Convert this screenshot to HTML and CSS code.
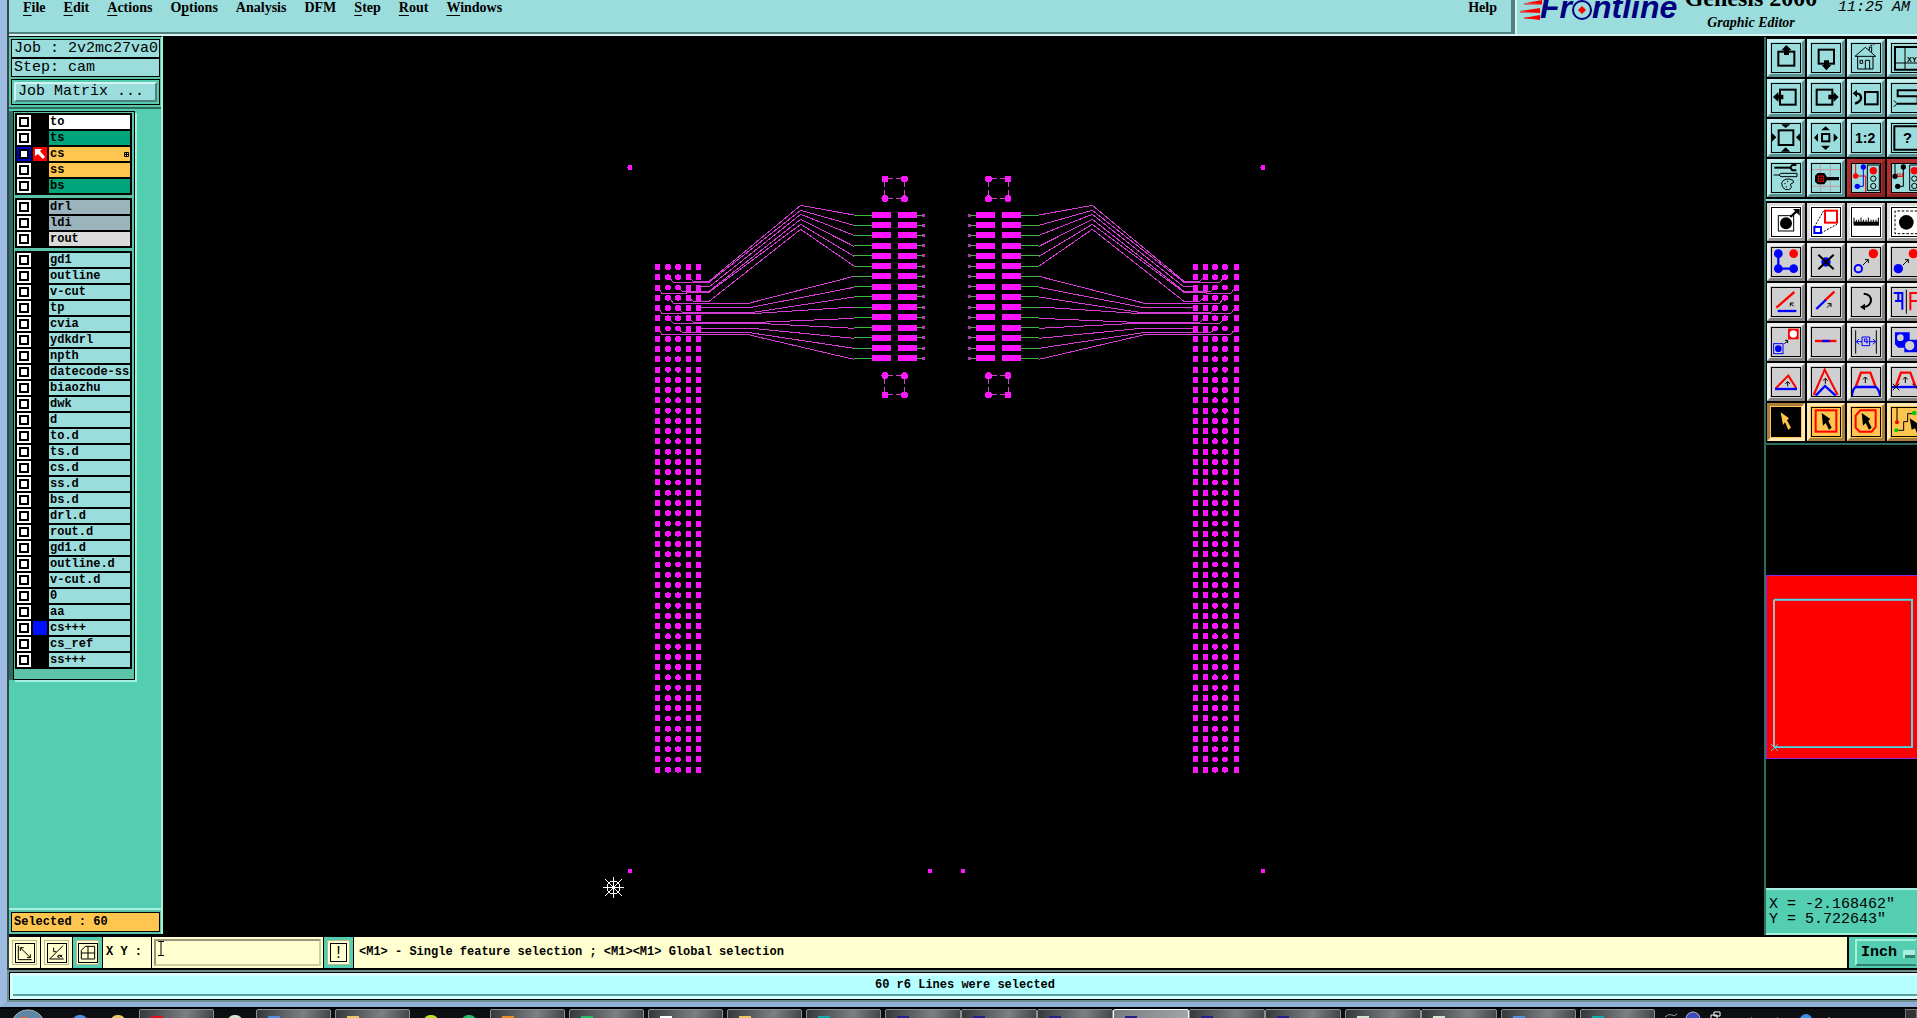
FILE: index.html
```html
<!DOCTYPE html>
<html lang="en">
<head>
<meta charset="utf-8">
<title>Genesis 2000 Graphic Editor</title>
<link rel="stylesheet" href="styles.css">
</head>
<body>
<div class="window">
  <header class="header">
    <nav class="menubar">
      <button class="menu"><u>F</u>ile</button>
      <button class="menu"><u>E</u>dit</button>
      <button class="menu"><u>A</u>ctions</button>
      <button class="menu">O<u>p</u>tions</button>
      <button class="menu">Analysis</button>
      <button class="menu">DFM</button>
      <button class="menu"><u>S</u>tep</button>
      <button class="menu"><u>R</u>out</button>
      <button class="menu"><u>W</u>indows</button>
      <button class="menu menu-help">Help</button>
    </nav>
    <div class="brand">
      <svg class="logo" viewBox="0 0 162 36" role="img" aria-label="Frontline">
        <path d="M6 3L22 0V4ZM0 11L20 8V13ZM4 18L20 15V20Z" fill="#f00"/>
        <path d="M4 4H22M0 12H20M4 18H20" stroke="#f00"/>
        <text x="20" y="18" class="logo-text">Fr</text>
        <text x="72" y="18" class="logo-text">ntline</text>
        <circle cx="62" cy="10" r="9" fill="#9bdcdc" stroke="#000080" stroke-width="2"/>
        <path d="M62 6L66 10L62 14L58 10Z" fill="#f00"/>
      </svg>
      <div class="product">
        <strong class="product-name">Genesis 2000</strong>
        <em class="product-sub">Graphic Editor</em>
      </div>
      <time class="clock">11:25 AM</time>
    </div>
  </header>

  <div class="workspace">
    <aside class="sidebar">
      <div class="job">
        <p class="field">Job : 2v2mc27va0</p>
        <p class="field">Step: cam</p>
        <div class="matrix"><button class="matrix-button">Job Matrix ...</button></div>
      </div>
      <div class="layers">
        <ul class="group">
          <li class="layer white"><input type="checkbox" id="l1"><i></i><label for="l1">to</label></li>
          <li class="layer mask"><input type="checkbox" id="l2"><i></i><label for="l2">ts</label></li>
          <li class="layer copper active"><input type="checkbox" id="l3" checked><i><svg viewBox="0 0 14 14"><path d="M2 2H9L7 4L12 10L10 12L5 7L2 9Z" fill="#fff"/></svg></i><label for="l3">cs <svg class="mark" viewBox="0 0 5 5"><path d="M0.500 0.500H4.500V4.500H0.500ZM2.500 0V5M0 2.500H5" fill="none" stroke="#000"/></svg></label></li>
          <li class="layer copper"><input type="checkbox" id="l4"><i></i><label for="l4">ss</label></li>
          <li class="layer mask"><input type="checkbox" id="l5"><i></i><label for="l5">bs</label></li>
        </ul>
        <ul class="group">
          <li class="layer drill"><input type="checkbox" id="l6"><i></i><label for="l6">drl</label></li>
          <li class="layer drill"><input type="checkbox" id="l7"><i></i><label for="l7">ldi</label></li>
          <li class="layer rout"><input type="checkbox" id="l8"><i></i><label for="l8">rout</label></li>
        </ul>
        <ul class="group">
          <li class="layer"><input type="checkbox" id="m1"><i></i><label for="m1">gd1</label></li>
          <li class="layer"><input type="checkbox" id="m2"><i></i><label for="m2">outline</label></li>
          <li class="layer"><input type="checkbox" id="m3"><i></i><label for="m3">v-cut</label></li>
          <li class="layer"><input type="checkbox" id="m4"><i></i><label for="m4">tp</label></li>
          <li class="layer"><input type="checkbox" id="m5"><i></i><label for="m5">cvia</label></li>
          <li class="layer"><input type="checkbox" id="m6"><i></i><label for="m6">ydkdrl</label></li>
          <li class="layer"><input type="checkbox" id="m7"><i></i><label for="m7">npth</label></li>
          <li class="layer"><input type="checkbox" id="m8"><i></i><label for="m8">datecode-ss</label></li>
          <li class="layer"><input type="checkbox" id="m9"><i></i><label for="m9">biaozhu</label></li>
          <li class="layer"><input type="checkbox" id="m10"><i></i><label for="m10">dwk</label></li>
          <li class="layer"><input type="checkbox" id="m11"><i></i><label for="m11">d</label></li>
          <li class="layer"><input type="checkbox" id="m12"><i></i><label for="m12">to.d</label></li>
          <li class="layer"><input type="checkbox" id="m13"><i></i><label for="m13">ts.d</label></li>
          <li class="layer"><input type="checkbox" id="m14"><i></i><label for="m14">cs.d</label></li>
          <li class="layer"><input type="checkbox" id="m15"><i></i><label for="m15">ss.d</label></li>
          <li class="layer"><input type="checkbox" id="m16"><i></i><label for="m16">bs.d</label></li>
          <li class="layer"><input type="checkbox" id="m17"><i></i><label for="m17">drl.d</label></li>
          <li class="layer"><input type="checkbox" id="m18"><i></i><label for="m18">rout.d</label></li>
          <li class="layer"><input type="checkbox" id="m19"><i></i><label for="m19">gd1.d</label></li>
          <li class="layer"><input type="checkbox" id="m20"><i></i><label for="m20">outline.d</label></li>
          <li class="layer"><input type="checkbox" id="m21"><i></i><label for="m21">v-cut.d</label></li>
          <li class="layer"><input type="checkbox" id="m22"><i></i><label for="m22">0</label></li>
          <li class="layer"><input type="checkbox" id="m23"><i></i><label for="m23">aa</label></li>
          <li class="layer shown"><input type="checkbox" id="m24"><i></i><label for="m24">cs+++</label></li>
          <li class="layer"><input type="checkbox" id="m25"><i></i><label for="m25">cs_ref</label></li>
          <li class="layer"><input type="checkbox" id="m26"><i></i><label for="m26">ss+++</label></li>
        </ul>
      </div>
      <div class="selected-wrap"><p class="selected">Selected : 60</p></div>
    </aside>

    <main class="canvas">
      <svg class="board" viewBox="163 36 1601 898" preserveAspectRatio="xMidYMin meet">
        <defs>
          <g id="half">
            <g stroke="#ff14ff" fill="none">
              <path d="M657 264V774M688 264V774M698 264V774" stroke-width="5" stroke-dasharray="6 4.26"/>
              <path d="M668 267V774M678 267V774" stroke-width="6" stroke-dasharray="0.01 10.25" stroke-linecap="round"/>
              <path d="M881.5 212V362M907.5 212V362" stroke-width="19" stroke-dasharray="6 4.24"/>
            </g>
            <path d="M863 214.500V362" stroke="#3db83d" stroke-width="18" stroke-dasharray="1 9.24"/>
            <path d="M919.500 214.500V362" stroke="#3db83d" stroke-width="5" stroke-dasharray="1 9.24"/>
            <path d="M923.500 213.500V362" stroke="#b535b5" stroke-width="3" stroke-dasharray="3 7.240"/>
            <g class="wires" transform="translate(640 150) scale(.33333)">
              <path d="M642 195L482 166L207 394H160L150 384"/>
              <path d="M642 226L482 181L207 397H100L90 385"/>
              <path d="M642 256L482 193L207 411H175"/>
              <path d="M642 289L482 208L207 424H127L118 415"/>
              <path d="M642 319L482 223L207 427H139V430H66L58 418"/>
              <path d="M642 348L482 238L207 454H160L150 446"/>
              <path d="M642 379L325 460H100L90 446"/>
              <path d="M642 412L333 472H175"/>
              <path d="M642 441L340 487H127L118 478"/>
              <path d="M642 471L350 490H66L58 478"/>
              <path d="M642 505L355 517H160L150 507"/>
              <path d="M642 535L355 520H100L90 510"/>
              <path d="M642 565L335 535H175"/>
              <path d="M642 595L322 547H127L118 540"/>
              <path d="M642 628L320 553H66L58 542"/>
            </g>
            <g fill="#ff14ff">
              <circle cx="885" cy="179" r="3.500"/><circle cx="904.500" cy="179" r="3.500"/>
              <circle cx="885" cy="198.500" r="3.500"/><circle cx="904.500" cy="198.500" r="3.500"/>
              <circle cx="885" cy="375.500" r="3.500"/><circle cx="904.500" cy="375.500" r="3.500"/>
              <circle cx="885" cy="395" r="3.500"/><circle cx="904.500" cy="395" r="3.500"/>
              <circle cx="630" cy="167.500" r="2.500"/><circle cx="630" cy="871" r="2.500"/>
              <circle cx="930" cy="871" r="2.500"/>
            </g>
            <path class="corner" d="M885 178.500H904M885 198.500H904M884.500 179V198M904.500 179V198M885 375.500H904M885 394.500H904M884.500 376V395M904.500 376V395" stroke-dasharray="8 3 9"/>
          </g>
        </defs>
        <use href="#half"/>
        <use href="#half" transform="translate(1893 0) scale(-1 1)"/>
        <g stroke="#fff" fill="none">
          <circle cx="613.500" cy="887.500" r="6.500"/>
          <path d="M603 887.500H624M613.500 877V898M605 879L622 896M622 879L605 896"/>
        </g>
      </svg>
    </main>

    <aside class="tools">
      <div class="toolbox">
        <button class="tool" aria-label="Pan up"><svg viewBox="0 0 90 90"><rect x="22" y="26" width="48" height="42" class="k5"/><path d="M46 6L62 22H54V36H39V22H31Z"/></svg></button>
        <button class="tool" aria-label="Pan down"><svg viewBox="0 0 90 90"><rect x="23" y="20" width="46" height="42" class="k5"/><path d="M46 82L32 66H39V52H54V66H61Z"/></svg></button>
        <button class="tool" aria-label="Home"><svg viewBox="0 0 90 90"><path class="k3" d="M12 40L43 13L74 40ZM20 40V78H66V40M27 52H35V61H27ZM43 78V52H56V78M55 22V12H62V28M58 7H64M66 3H72"/></svg></button>
        <button class="tool" aria-label="Zoom to coordinates"><svg viewBox="0 0 90 90"><path class="k5" d="M92 12H12V80H92"/><path class="k3" d="M42 12V80M12 60H92"/><text x="48" y="56" font-size="22">XY</text></svg></button>
        <button class="tool" aria-label="Pan left"><svg viewBox="0 0 90 90"><rect x="27" y="20" width="47" height="45" class="k5"/><path d="M6 42L22 27V35H37V49H22V57Z"/></svg></button>
        <button class="tool" aria-label="Pan right"><svg viewBox="0 0 90 90"><rect x="17" y="20" width="47" height="45" class="k5"/><path d="M83 42L68 27V35H52V49H68V57Z"/></svg></button>
        <button class="tool" aria-label="Previous view"><svg viewBox="0 0 90 90"><rect x="42" y="27" width="38" height="37" class="k5"/><path class="k7" d="M14 31Q31 31 30 46Q28 57 12 62"/><path d="M5 31L18 20V43Z"/></svg></button>
        <button class="tool" aria-label="Snake view"><svg viewBox="0 0 90 90"><path class="k5" d="M92 22H20V40H80V62H18"/><path class="k3" d="M8 52L18 62L8 72"/></svg></button>
        <button class="tool" aria-label="Zoom in"><svg viewBox="0 0 90 90"><rect x="23" y="22" width="44" height="44" class="k5"/><path d="M30 4H58L44 15ZM30 86H58L44 73ZM3 30V56L16 43ZM88 30V56L75 43Z"/></svg></button>
        <button class="tool" aria-label="Zoom out"><svg viewBox="0 0 90 90"><rect x="33" y="33" width="22" height="22" class="k5"/><path d="M44 10L57 22H30ZM44 81L30 68H57ZM9 44L21 31V57ZM81 44L68 31V57Z"/></svg></button>
        <button class="tool" aria-label="Scale 1:2"><svg viewBox="0 0 90 90"><text x="12" y="60" font-size="42">1:2</text></svg></button>
        <button class="tool" aria-label="Query"><svg viewBox="0 0 90 90"><path class="k5" d="M92 10H10V80H92"/><text x="36" y="61" font-size="44">?</text></svg></button>
        <button class="tool" aria-label="Settings"><svg viewBox="0 0 90 90"><path class="k5" d="M10 14H58"/><path class="k5" d="M76 6H64L58 14L64 22H76"/><path class="k3" d="M8 36H24L30 31H78V41H30L24 36M32 60Q36 48 54 48Q70 50 68 58L58 64Q66 76 52 80Q34 82 32 60ZM40 62H44M48 56H52M44 72H48"/></svg></button>
        <button class="tool" aria-label="Snap point"><svg viewBox="0 0 90 90"><path d="M28 0V90M58 0V90M0 20H90M0 70H90" stroke="#c59aa0" stroke-width="3"/><path d="M20 30H40L48 42H84V52H48L40 64H20L12 56V38Z"/><path d="M22 39H38V55H22ZM29 46H32V49H29Z" fill="none" stroke="#f00" stroke-width="3"/></svg></button>
        <button class="tool alert" aria-label="Net check"><svg viewBox="0 0 90 90"><path d="M14 0V39H44V90" class="r3"/><path d="M37 12V70H19" class="b4"/><circle cx="14" cy="39" r="8" fill="#f00"/><circle cx="37" cy="12" r="8" fill="#00f"/><circle cx="19" cy="70" r="8" fill="#00f"/><rect x="49" y="6" width="36" height="76" class="k3"/><circle cx="67" cy="23" r="11" fill="#f00"/><circle cx="67" cy="47" r="8" class="k3"/><circle cx="67" cy="69" r="8" class="k3"/></svg></button>
        <button class="tool alert" aria-label="Net repair"><svg viewBox="0 0 90 90"><path class="k3" d="M37 12V70H20M12 0V40"/><path class="r3" d="M12 40H37M20 30V40M27 30V40M34 30V40"/><circle cx="37" cy="12" r="8"/><circle cx="12" cy="40" r="8"/><circle cx="20" cy="70" r="8"/><path class="k3" d="M92 6H56V82H92"/><circle cx="70" cy="23" r="11" fill="#f00"/><circle cx="70" cy="47" r="8" class="k3"/><circle cx="70" cy="69" r="8" class="k3"/></svg></button>
      </div>
      <div class="toolbox edit">
        <button class="tool paper" aria-label="Add feature"><svg viewBox="0 0 90 90"><rect x="22" y="26" width="46" height="46" class="k3"/><circle cx="45" cy="49" r="18"/><path class="k7" d="M58 30L76 14"/><path d="M66 6H86V26Z"/></svg></button>
        <button class="tool paper" aria-label="Resize feature"><svg viewBox="0 0 90 90"><path class="k3" stroke-dasharray="6 4" d="M10 60L38 11M30 78L78 52"/><rect x="42" y="11" width="36" height="36" class="r5"/><rect x="10" y="60" width="20" height="18" class="b5"/></svg></button>
        <button class="tool paper" aria-label="Measure"><svg viewBox="0 0 90 90"><path d="M8 44H84V56H8Z"/><path class="k3" d="M9 32V50M16 38V50M23 38V50M30 32V50M37 38V50M45 38V50M52 32V50M60 38V50M67 38V50M75 38V50M82 32V50"/></svg></button>
        <button class="tool paper" aria-label="Select area"><svg viewBox="0 0 90 90"><path class="k3" stroke-dasharray="8 5" d="M92 12H12V80H92"/><circle cx="46" cy="46" r="22"/></svg></button>

        <button class="tool gray" aria-label="Connect features"><svg viewBox="0 0 90 90"><path class="b7" d="M22 20V65H68"/><circle cx="22" cy="20" r="13" fill="#00f"/><circle cx="68" cy="20" r="13" fill="#f00"/><circle cx="22" cy="65" r="13" fill="#00f"/><circle cx="68" cy="65" r="13" fill="#00f"/></svg></button>
        <button class="tool gray" aria-label="Delete"><svg viewBox="0 0 90 90"><circle cx="45" cy="45" r="14" fill="#00f"/><path class="k5" d="M22 23L68 67M68 23L22 67"/></svg></button>
        <button class="tool gray" aria-label="Copy"><svg viewBox="0 0 90 90"><circle cx="67" cy="20" r="14" fill="#f00"/><circle cx="22" cy="65" r="11" class="b5"/><path class="k3" d="M36 54L52 38M42 38H52V48"/></svg></button>
        <button class="tool gray" aria-label="Move"><svg viewBox="0 0 90 90"><circle cx="67" cy="20" r="14" fill="#f00"/><circle cx="22" cy="65" r="14" fill="#00f"/><path class="k3" d="M36 54L52 38M42 38H52V48"/></svg></button>

        <button class="tool gray" aria-label="Change angle"><svg viewBox="0 0 90 90"><path class="r7" d="M16 62L70 15"/><path class="b7" d="M20 72H76"/><path class="k3" d="M68 58L58 48M58 58V48H68"/></svg></button>
        <button class="tool gray" aria-label="Extend line"><svg viewBox="0 0 90 90"><path class="r7" d="M42 40L70 14"/><path class="b7" d="M16 66L44 39"/><path class="k3" d="M48 62L60 50M50 50H60V60"/></svg></button>
        <button class="tool gray" aria-label="Rotate"><svg viewBox="0 0 90 90"><path class="k5" d="M38 20Q61 22 60 42Q56 60 36 60"/><path d="M27 60L42 50V70Z"/></svg></button>
        <button class="tool gray" aria-label="Mirror"><svg viewBox="0 0 90 90"><path class="b5" d="M8 18H34V68M12 42H34M22 18V42"/><path class="k3" d="M46 8V80"/><path class="r5" d="M58 70V18H92M58 42H92"/></svg></button>

        <button class="tool gray" aria-label="Substitute"><svg viewBox="0 0 90 90"><path d="M51 5H83V37H51Z" fill="#f00"/><circle cx="67" cy="21" r="11" fill="#fff"/><rect x="8" y="50" width="28" height="30" class="b3"/><circle cx="22" cy="65" r="10" fill="#00f"/><path class="k3" d="M40 50L50 42M42 40H50V48"/></svg></button>
        <button class="tool gray" aria-label="Break line"><svg viewBox="0 0 90 90"><path class="r7" d="M12 42H76"/><path class="b7" d="M34 42H56"/></svg></button>
        <button class="tool gray" aria-label="Spacing"><svg viewBox="0 0 90 90"><path class="k3" d="M14 10V80M76 10V80"/><path class="b3" d="M33 30H56V56H33ZM16 44H33M56 44H74M24 36L16 44L24 52M66 36L74 44L66 52M48 50V36H40V44H52"/></svg></button>
        <button class="tool gray" aria-label="Merge shapes"><svg viewBox="0 0 90 90"><path d="M12 16H56V38H90V76H40V62H22L12 52Z" fill="#00f"/><circle cx="28" cy="32" r="10" fill="#cfcfcf"/><circle cx="56" cy="56" r="14" fill="#cfcfcf"/></svg></button>

        <button class="tool gray" aria-label="Triangle"><svg viewBox="0 0 90 90"><path class="r5" d="M14 64L52 26L76 64"/><path class="b7" d="M12 66H78"/><path class="k3" d="M50 58V44M43 50L50 44L57 50"/></svg></button>
        <button class="tool gray" aria-label="Peak"><svg viewBox="0 0 90 90"><path class="r5" d="M8 84L41 8L80 84"/><path class="b7" d="M14 86L42 57L74 86"/><path class="k3" d="M43 50V34M36 41L43 34L50 41"/></svg></button>
        <button class="tool gray" aria-label="Trapezoid"><svg viewBox="0 0 90 90"><path class="r7" d="M14 60L30 17H58L74 60"/><path class="b7" d="M2 88Q6 64 14 60H74Q84 66 88 88"/><path class="k3" d="M43 48V30M36 37L43 30L50 37"/></svg></button>
        <button class="tool gray" aria-label="Trapezoid trim"><svg viewBox="0 0 90 90"><path class="r7" d="M14 60L30 17H58L74 60"/><path class="b7" d="M2 60H92"/><path class="k3" d="M43 48V30M36 37L43 30L50 37M5 50L25 70M25 50L5 70M64 50L84 70"/></svg></button>

        <button class="tool gold pressed" aria-label="Select single feature"><svg viewBox="0 0 90 90"><path fill="#ffc64f" d="M29 16L54 34L48 40L60 62L52 68L42 46L36 54Z"/></svg></button>
        <button class="tool gold" aria-label="Select by rectangle"><svg viewBox="0 0 90 90"><rect x="14" y="10" width="62" height="64" class="r5"/><path d="M32 18L58 36L52 42L62 62L54 68L44 48L36 56Z"/></svg></button>
        <button class="tool gold" aria-label="Select by polygon"><svg viewBox="0 0 90 90"><path class="r5" d="M28 10H74V60L62 74H26L14 62V26Z"/><path d="M32 18L58 36L52 42L62 62L54 68L44 48L36 56Z"/></svg></button>
        <button class="tool gold" aria-label="Select net"><svg viewBox="0 0 90 90"><path class="k3" d="M18 0V46M16 70H38V44H50V20H70"/><circle cx="18" cy="46" r="6" fill="#f00"/><circle cx="16" cy="70" r="6" fill="#0c0"/><circle cx="70" cy="18" r="7" fill="#0c0"/><path d="M56 34L90 56L84 66L90 80L80 84L72 64L62 68Z"/></svg></button>
      </div>
      <div class="overview">
        <div class="profile">
          <svg viewBox="0 0 150 184" preserveAspectRatio="none">
            <path d="M7 24H145V173H7" fill="none" stroke="#49dce6" stroke-width="2"/>
            <path d="M7 24V173" stroke="#b5b5b5" stroke-width="2"/>
            <path d="M4 170L11 177M11 170L4 177" stroke="#49dce6"/>
          </svg>
        </div>
      </div>
      <div class="coords">
        <p>X = -2.168462"</p>
        <p>Y = 5.722643"</p>
      </div>
    </aside>
  </div>

  <form class="command">
    <button type="button" class="mode" aria-label="Snap mode"><svg viewBox="0 0 60 60"><path d="M10 8V50H50M16 14L46 44M16 24V14H26M46 34V44H36"/></svg></button>
    <button type="button" class="mode" aria-label="Angle mode"><svg viewBox="0 0 60 60"><path d="M48 8L8 48H50M20 14V26H28M40 36Q30 36 32 42Q36 46 46 36M40 36L46 44"/></svg></button>
    <button type="button" class="mode on" aria-label="Grid mode"><svg viewBox="0 0 60 60"><path d="M10 48V22L22 10H50V48ZM30 10V48M10 30H50"/></svg></button>
    <label class="xy-label" for="xy">X Y :</label>
    <div class="xy-box">
      <input class="xy" id="xy" type="text">
      <svg class="ibeam" viewBox="0 0 6 15"><path d="M0 0.500H6M0 14.500H6M3 0V15" stroke="#000"/></svg>
    </div>
    <button type="button" class="mode on bang" aria-label="Apply">!</button>
    <output class="hint">&lt;M1&gt; - Single feature selection ; &lt;M1&gt;&lt;M1&gt; Global selection</output>
    <div class="units">
      <select class="unit-select" aria-label="Units"><option>Inch</option></select>
    </div>
  </form>
  <footer class="status"><p>60 r6 Lines were selected</p></footer>
</div>

<nav class="taskbar">
  <button class="start" aria-label="Start"><svg viewBox="0 0 36 36"><circle cx="18" cy="18" r="17" fill="#5f87a5" stroke="#9fb8c8"/><path d="M9 10Q14 6 18 9V17H9Z" fill="#f26522"/><path d="M19 9Q24 12 28 8V17H19Z" fill="#8cc63f"/></svg></button>
  <span class="quick blue"></span><span class="quick sand"></span>
  <button class="task red" aria-label="Reader"></button>
  <span class="quick mint"></span>
  <button class="task blue" aria-label="Disk"></button>
  <button class="task sand" aria-label="Pictures"></button>
  <span class="quick lime"></span><span class="quick green"></span>
  <button class="task orange" aria-label="Player"></button>
  <button class="task green" aria-label="Sheet"></button>
  <button class="task white" aria-label="Document"></button>
  <button class="task sand" aria-label="Paint"></button>
  <button class="task cyan" aria-label="Chat"></button>
  <div class="stack">
    <button class="task navy" aria-label="Terminal 1"></button>
    <button class="task navy" aria-label="Terminal 2"></button>
    <button class="task navy" aria-label="Terminal 3"></button>
    <button class="task navy current" aria-label="Graphic Editor"></button>
    <button class="task navy" aria-label="Terminal 4"></button>
    <button class="task navy" aria-label="Terminal 5"></button>
  </div>
  <div class="stack">
    <button class="task mint" aria-label="Notes 1"></button>
    <button class="task mint" aria-label="Notes 2"></button>
  </div>
  <button class="task blue" aria-label="Notepad"></button>
  <button class="task cyan" aria-label="Messages"></button>
  <svg class="tray" viewBox="0 0 240 10"><path d="M4 8Q8 4 11 6T16 5" stroke="#999" fill="none"/><circle cx="32" cy="10" r="7" fill="#3a4bc0" stroke="#bbb"/><path d="M53 3H59V7H53ZM50 6H56V10H50Z" fill="#000" stroke="#fff"/><circle cx="145" cy="11" r="6" fill="#3a8fe8"/><path d="M90 9H91M116 9H117M168 8V10" stroke="#ccc"/></svg>
  <button class="desktop" aria-label="Show desktop"></button>
</nav>
</body>
</html>
```
FILE: styles.css
```css
* { box-sizing: border-box; }

body {
  --aqua: #9bdcdc;
  --teal: #53ceb0;
  --teal-light: #a8efdd;
  --teal-dark: #2c6e5f;
  --cream: #ffffcf;
  --gold: #ffc64f;
  margin: 0;
  height: 100vh;
  display: flex;
  flex-direction: column;
  overflow: hidden;
  background: #000;
  color: #000;
  font: bold 12px/14px "Liberation Mono", monospace;
}

p, ul { margin: 0; padding: 0; list-style: none; }
button, input, select { font: inherit; color: inherit; margin: 0; padding: 0; border-radius: 0; }

.window {
  flex: 1;
  min-height: 0;
  display: flex;
  flex-direction: column;
  border-left: 7px solid #9dbbe0;
  border-bottom: 7px solid #8fb0d8;
  box-shadow: inset 2px 0 #33474a;
  padding-left: 2px;
}

/* header */
.header {
  flex: none;
  display: grid;
  grid-template-columns: 1fr 402px;
  grid-template-rows: minmax(0, 1fr);
  gap: 2px;
  height: 36px;
  background: #52807f;
  border-bottom: 2px solid #d4f4f4;
  overflow: hidden;
}
.menubar {
  display: flex;
  align-items: flex-start;
  gap: 18px;
  padding: 0 14px;
  background: var(--aqua);
  border-right: 2px solid #52807f;
  border-bottom: 2px solid #52807f;
}
.menu {
  border: 0;
  background: none;
  font: bold 14px/15px "Liberation Serif", serif;
}
.menu u { text-underline-offset: 3px; }
.menu-help { margin-left: auto; }
.brand {
  display: flex;
  align-items: flex-start;
  background: var(--aqua);
  border-left: 2px solid #d4f4f4;
  padding-left: 3px;
}
.logo { width: 162px; height: 36px; flex: none; }
.logo-text { font: italic bold 32px "Liberation Sans", sans-serif; fill: #000080; }
.product {
  display: flex;
  flex-direction: column;
  align-items: center;
  align-self: flex-end;
  gap: 4px;
  width: 138px;
  padding-bottom: 3px;
}
.product-name { font: bold 24px/26px "Liberation Serif", serif; white-space: nowrap; }
.product-sub { font: italic bold 14px/16px "Liberation Serif", serif; }
.clock { font: italic 15px/16px "Liberation Mono", monospace; margin-left: 18px; white-space: nowrap; }

/* workspace */
.workspace {
  flex: 1;
  min-height: 0;
  display: grid;
  grid-template-columns: 154px minmax(0, 1fr) 153px;
  background: #000;
}
.sidebar {
  display: flex;
  flex-direction: column;
  background: var(--teal);
  border-right: 2px solid var(--teal-light);
  border-top: 1px solid #000;
  margin-bottom: 3px;
}
.job {
  padding: 2px 0 2px 2px;
  background: #5cc4a8;
  border-bottom: 2px solid var(--teal-dark);
}
.field, .matrix, .selected { border: 1px solid #000; background: var(--aqua); margin-right: 1px; }
.field {
  padding: 0 2px;
  font: 15px/17px "Liberation Mono", monospace;
  white-space: nowrap;
}
.matrix { margin-top: 2px; padding: 2px; background: var(--teal); }
.matrix-button {
  display: block;
  width: 100%;
  border: 2px solid;
  border-color: #d4f4f4 #52807f #52807f #d4f4f4;
  background: var(--aqua);
  padding: 0 2px;
  font: 15px/16px "Liberation Mono", monospace;
  text-align: left;
}
.layers {
  align-self: flex-start;
  display: flex;
  flex-direction: column;
  gap: 3px;
  margin: 2px 0 0 4px;
  padding: 1px 2px 10px 1px;
  background: #5cc4a8;
  border: 1px solid #000;
  box-shadow: 2px 2px var(--teal-light), -4px 0 var(--teal-dark);
}
.group { background: #000; padding: 2px 2px 0 2px; }
.layer {
  display: grid;
  grid-template-columns: 14px 14px 81px;
  gap: 2px;
  height: 14px;
  margin-bottom: 2px;
}
.layer input {
  appearance: none;
  width: 14px;
  height: 14px;
  background: #fff;
  border: 2px solid #fff;
  box-shadow: inset 0 0 0 2px #000;
}
.layer input:checked { border-color: #0000c8; }
.layer i { display: block; }
.layer i svg { display: block; width: 14px; height: 14px; }
.layer.active i { background: #f00; }
.layer.shown i { background: #0010ff; }
.layer label {
  display: flex;
  justify-content: space-between;
  align-items: center;
  padding: 0 1px;
  background: var(--aqua);
  line-height: 14px;
  white-space: nowrap;
}
.layer.white label { background: #fff; }
.layer.mask label { background: #00a57c; }
.layer.copper label { background: var(--gold); }
.layer.drill label { background: #9bb4bc; }
.layer.rout label { background: #dadada; }
.mark { width: 5px; height: 5px; }
.selected-wrap {
  margin-top: auto;
  padding: 2px 0 2px 2px;
  border-top: 2px solid var(--teal-light);
  background: #5cc4a8;
}
.selected { background: var(--gold); padding: 2px; }

.canvas { min-width: 0; min-height: 0; background: #000; }
.board { display: block; width: 100%; height: 100%; shape-rendering: crispEdges; }
.wires path { fill: none; stroke: #d43cd4; stroke-width: 1px; vector-effect: non-scaling-stroke; }
.corner { fill: none; stroke: #d43cd4; }

/* tools */
.tools {
  display: flex;
  flex-direction: column;
  margin: 1px 0 2px;
  border-left: 2px solid var(--teal-dark);
  overflow: hidden;
}
.toolbox {
  display: grid;
  grid-template-columns: repeat(4, 38px);
  gap: 2px;
  padding: 2px 0 2px 1px;
  overflow: hidden;
  border-bottom: 2px solid var(--aqua);
}
.toolbox.edit { border-bottom-color: var(--teal-dark); }
.tool {
  width: 38px;
  height: 38px;
  padding: 1px;
  background: var(--aqua);
  border: 3px solid;
  border-color: #c4f0f0 #5c9090 #5c9090 #c4f0f0;
}
.tool svg { display: block; width: 30px; height: 30px; outline: 1px solid #000; outline-offset: -1px; }
.tool text { font-family: "Liberation Sans", sans-serif; font-weight: bold; }
.tool.alert { border-color: #b03030 #8a2020 #8a2020 #b03030; background: #b03030; }
.tool.alert svg { background: var(--aqua); }
.tool.paper { background: #fff; border-color: #ddd #999 #999 #ddd; }
.tool.gray { background: #cfcfcf; border-color: #f0f0f0 #858585 #858585 #f0f0f0; }
.tool.gold { background: var(--gold); border-color: #ffe9b0 #a8803c #a8803c #ffe9b0; }
.tool.pressed { border-color: #a8803c #ffe9b0 #ffe9b0 #a8803c; }
.tool.pressed svg { background: #000; }
.k3, .k5, .k7, .r3, .r5, .r7, .b3, .b4, .b5, .b7 { fill: none; stroke: #000; stroke-width: 3; }
.k5, .r5, .b5 { stroke-width: 6; }
.k7, .r7, .b7 { stroke-width: 7; }
.r3, .r5, .r7 { stroke: #f00; }
.b3, .b4, .b5, .b7 { stroke: #00f; }

.overview {
  flex: 1;
  min-height: 0;
  display: flex;
  align-items: center;
}
.profile {
  width: 100%;
  height: 184px;
  background: #f00;
  border: solid #8a2be2;
  border-width: 1px 0 1px 1px;
}
.profile svg { display: block; width: 100%; height: 100%; }
.coords {
  padding: 7px 2px 6px 3px;
  background: var(--teal);
  border: solid var(--teal-light);
  border-width: 2px 0 2px 0;
  font: 15px/15px "Liberation Mono", monospace;
  white-space: nowrap;
}

/* command bar */
.command {
  flex: none;
  display: flex;
  height: 33px;
  background: #000;
  gap: 1px;
  border-bottom: 2px solid #000;
}
.mode {
  width: 31px;
  background: var(--cream);
  border: 3px solid var(--cream);
  box-shadow: inset 0 0 0 1px #b9b98e;
}
.mode svg { display: block; width: 20px; height: 20px; margin: auto; outline: 1px solid #000; outline-offset: -1px; }
.mode path { fill: none; stroke: #000; stroke-width: 3; }
.mode.on { width: 29px; border-color: var(--teal); }
.mode.bang {
  font: 16px/16px "Liberation Sans", sans-serif;
  outline: 1px solid #000;
  outline-offset: -7px;
}
.xy-label { width: 48px; padding-left: 3px; background: var(--cream); line-height: 31px; }
.xy-box { position: relative; width: 171px; padding: 2px; background: var(--cream); }
.xy {
  display: block;
  width: 100%;
  height: 100%;
  background: var(--cream);
  border: 2px solid;
  border-color: #97977a #cfcfa4 #cfcfa4 #97977a;
  outline: 0;
}
.ibeam { position: absolute; left: 6px; top: 4px; width: 6px; height: 15px; }
.hint {
  flex: 1;
  padding-left: 5px;
  background: var(--cream);
  line-height: 31px;
  white-space: nowrap;
  overflow: hidden;
}
.units { width: 68px; margin-left: 1px; padding: 2px 0 2px 6px; background: var(--teal); }
.unit-select {
  appearance: none;
  width: 100%;
  height: 100%;
  padding-left: 4px;
  border: 2px solid;
  border-color: var(--teal-light) transparent #2f7f6a var(--teal-light);
  background:
    linear-gradient(#2f7f6a, #2f7f6a) right 0 top 14px / 10px 3px no-repeat,
    linear-gradient(var(--teal-light), var(--teal-light)) right 0 top 9px / 12px 8px no-repeat,
    var(--teal);
  font-size: 15px;
}

.status {
  flex: none;
  margin-top: 2px;
  border: solid #000;
  border-width: 1px 0 1px 1px;
  outline: 2px solid #6d8f8f;
  background: #d6ffff;
  padding: 3px 0 3px 3px;
}
.status p {
  background: #b4ffff;
  border-bottom: 2px solid #5f9f9f;
  text-align: center;
  line-height: 18px;
}

/* taskbar */
.taskbar {
  flex: none;
  display: flex;
  align-items: flex-start;
  gap: 4px;
  height: 11px;
  padding-left: 10px;
  overflow: hidden;
  background: #0b0f12;
  border-top: 2px solid #000;
}
.start { flex: none; width: 36px; height: 36px; margin-right: 13px; border: 0; background: none; }
.start svg { display: block; }
.quick { flex: none; width: 14px; height: 8px; margin: 6px 10px 0; background: var(--c); border-radius: 6px 6px 0 0; }
.task {
  flex: none;
  width: 75px;
  height: 30px;
  border: 1px solid #8b8f92;
  border-radius: 2px;
  background:
    linear-gradient(var(--c), var(--c)) 11px 6px / 12px 10px no-repeat,
    linear-gradient(100deg, #34383a, #7c8082 60%, #3a3e40);
}
.stack { flex: none; display: flex; }
.stack .task { width: 76px; }
.task.current {
  border-color: #fff;
  background:
    linear-gradient(var(--c), var(--c)) 11px 6px / 12px 10px no-repeat,
    linear-gradient(100deg, #777b7e, #a4a7aa);
}
.red { --c: #d12; }
.blue { --c: #4a8fe0; }
.sand { --c: #e8c766; }
.mint { --c: #cfe5cf; }
.lime { --c: #bd2; }
.green { --c: #2b6; }
.orange { --c: #e82; }
.white { --c: #fff; }
.cyan { --c: #1aa; }
.navy { --c: #228; }
.tray { flex: none; width: 240px; height: 10px; margin-left: auto; }
.desktop { flex: none; width: 12px; height: 30px; border: 1px solid #777; background: #333; }
```
